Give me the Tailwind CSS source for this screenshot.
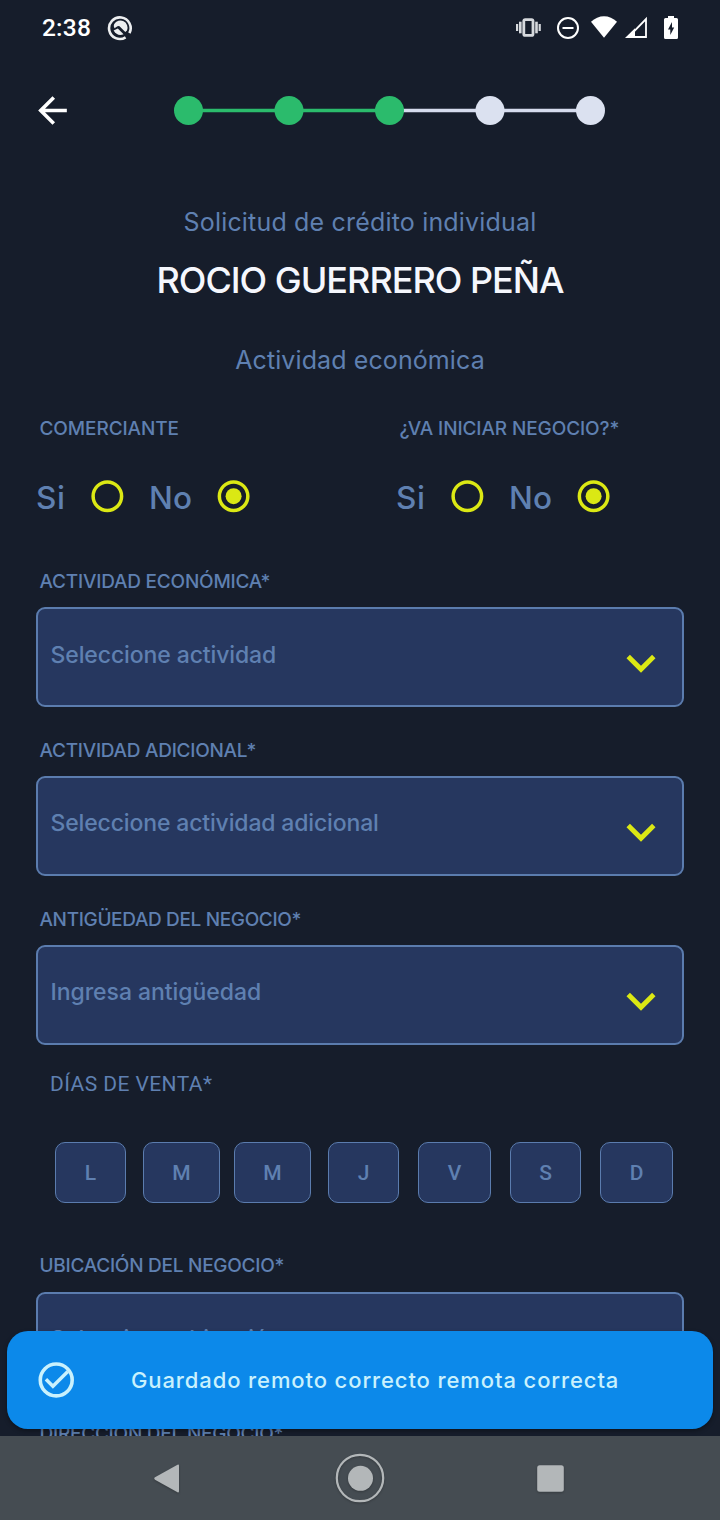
<!DOCTYPE html>
<html lang="es">
<head>
<meta charset="utf-8">
<title>Solicitud de crédito individual</title>
<script src="https://cdn.jsdelivr.net/npm/@tailwindcss/browser@4"></script>
</head>
<body class="bg-[#161d2b]">
<div class="relative flex h-[1520px] w-[720px] flex-col overflow-hidden bg-[#161d2b] font-['Inter',sans-serif] text-[#5f80b1]">

  <!-- Status bar -->
  <div class="flex h-14 shrink-0 items-center justify-between pr-[41px] pl-[42px] text-white">
    <div class="flex items-center gap-[15.500px]">
      <span class="pt-px font-['Roboto',sans-serif] text-[24.5px] leading-none font-medium tracking-[0.2px]">2:38</span>
      <svg class="-mt-px size-[26px]" viewBox="0 0 26 26" fill="none">
        <path d="M18.600 22.300A10.800 10.800 0 1 1 22.400 18.200" stroke="#eceef0" stroke-width="2.600"/>
        <path d="M7.200 9A7.200 7.200 0 0 1 20 15.500L18.300 17 12.500 11.300Q11.500 10.500 10.500 11.300L7.500 13.200Q6 11.500 7.200 9Z" fill="#eceef0"/>
        <path d="M6.600 15.500L10.800 13.600 16.600 19.200Q10.500 21.800 6.600 15.500Z" fill="#eceef0"/>
        <path d="M16.500 17.500L21 21.800" stroke="#161d2b" stroke-width="1.600"/>
      </svg>
    </div>
    <svg class="h-[26px] w-[164px]" viewBox="515 15 164 26" fill="none">
      <g fill="#d6d9dd">
        <rect x="523.800" y="19.600" width="9.200" height="15.800" rx="1.500" stroke="#d6d9dd" stroke-width="2.800" fill="none"/>
        <rect x="516" y="24" width="2.200" height="7"/><rect x="519" y="21.700" width="2.600" height="11.600"/>
        <rect x="535.200" y="21.700" width="2.600" height="11.600"/><rect x="538.600" y="24" width="2.200" height="7"/>
      </g>
      <circle cx="568" cy="28" r="10" stroke="#fff" stroke-width="2"/>
      <path d="M562.500 28h11" stroke="#fff" stroke-width="2"/>
      <path d="M604 37.800L591 21.800C598.500 14.300 609.500 14.300 617 21.800Z" fill="#fff"/>
      <path d="M646 19v18h-17.500z" stroke="#fff" stroke-width="1.800"/>
      <path d="M625 38L635 28.200V38Z" fill="#fff"/>
      <path d="M668 16h6v2h2.500q1.500 0 1.500 1.500v18q0 1.500-1.500 1.500h-11q-1.500 0-1.500-1.500v-18q0-1.500 1.500-1.500H668z" fill="#fff"/>
      <path d="M672 22l-4 7.500h2.300V35l3.900-7.500H672z" fill="#161d2b"/>
    </svg>
  </div>

  <!-- App bar with progress steps -->
  <div class="flex h-[108px] shrink-0 items-center pl-[31px]">
    <svg class="mt-px size-[43px]" viewBox="0 0 24 24" fill="#fff"><path d="M20 11H7.830l5.590-5.590L12 4l-8 8 8 8 1.410-1.410L7.830 13H20v-2z"/></svg>
    <svg class="ml-[100px] h-[29px] w-[431px]" viewBox="0 0 431 29">
      <path d="M14.500 14.400H215" stroke="#2bbb6c" stroke-width="3.500"/>
      <path d="M215.500 14.400H416" stroke="#d5dbed" stroke-width="3.500"/>
      <g fill="#2bbb6c"><circle cx="14.500" cy="14.500" r="14.500"/><circle cx="115" cy="14.500" r="14.500"/><circle cx="215.500" cy="14.500" r="14.500"/></g>
      <g fill="#dbe1f0"><circle cx="316" cy="14.500" r="14.500"/><circle cx="416.500" cy="14.500" r="14.500"/></g>
    </svg>
  </div>

  <!-- Headings -->
  <div class="flex shrink-0 flex-col items-center pt-[42px] whitespace-nowrap">
    <p class="text-[25px] leading-8 font-normal tracking-[0.180px]">Solicitud de crédito individual</p>
    <h1 class="mt-5 text-[36px] leading-[44px] font-medium tracking-[-1px] text-[#f5f7fd]">ROCIO GUERRERO PEÑA</h1>
    <h2 class="mt-[42px] text-[25px] leading-8 font-normal tracking-[0.100px]">Actividad económica</h2>
  </div>

  <!-- Yes / no questions -->
  <div class="mt-[41px] grid shrink-0 grid-cols-2 text-[19px] leading-6 font-medium whitespace-nowrap">
    <div class="pl-9">
      <p class="pl-[3.500px] tracking-[-0.096px]">COMERCIANTE</p>
      <div class="mt-[35px] flex h-10 items-center text-[31.500px]">
        <span class="w-[52px] pt-[4px] tracking-[0.600px]">Si</span>
        <svg class="size-[38.400px]" viewBox="0 0 24 24"><circle cx="12.100" cy="12" r="8.900" fill="none" stroke="#dbe814" stroke-width="2.200"/></svg>
        <span class="w-[88px] pt-[4px] pl-[22.500px] tracking-[0.200px]">No</span>
        <svg class="size-[38.400px]" viewBox="0 0 24 24"><circle cx="12.250" cy="12" r="8.900" fill="none" stroke="#dbe814" stroke-width="2.200"/><circle cx="12.250" cy="12" r="5" fill="#dbe814"/></svg>
      </div>
    </div>
    <div class="pl-9">
      <p class="pl-[3.500px] tracking-[-0.096px]">¿VA INICIAR NEGOCIO?*</p>
      <div class="mt-[35px] flex h-10 items-center text-[31.500px]">
        <span class="w-[52px] pt-[4px] tracking-[0.600px]">Si</span>
        <svg class="size-[38.400px]" viewBox="0 0 24 24"><circle cx="12.100" cy="12" r="8.900" fill="none" stroke="#dbe814" stroke-width="2.200"/></svg>
        <span class="w-[88px] pt-[4px] pl-[22.500px] tracking-[0.200px]">No</span>
        <svg class="size-[38.400px]" viewBox="0 0 24 24"><circle cx="12.250" cy="12" r="8.900" fill="none" stroke="#dbe814" stroke-width="2.200"/><circle cx="12.250" cy="12" r="5" fill="#dbe814"/></svg>
      </div>
    </div>
  </div>

  <!-- Select fields -->
  <div class="mt-[54px] flex shrink-0 flex-col gap-8 px-9 font-medium whitespace-nowrap">
    <div>
      <p class="pl-[3.500px] text-[19px] leading-6 tracking-[-0.210px]">ACTIVIDAD ECONÓMICA*</p>
      <div class="mt-[13px] flex h-[100px] items-start justify-between rounded-[9px] border-2 border-[#5b7cae] bg-[#26375f] pr-3 pl-[12.500px] text-[23px]">
        <span class="pt-8 leading-7 tracking-[-0.110px]">Seleccione actividad</span>
        <svg class="mt-[25px] size-[58px]" viewBox="0 0 24 24" fill="#dbe814"><path d="M7.410 8.590L12 13.170l4.590-4.580L18 10l-6 6-6-6z"/></svg>
      </div>
    </div>
    <div>
      <p class="pl-[3.500px] text-[19px] leading-6 tracking-[-0.267px]">ACTIVIDAD ADICIONAL*</p>
      <div class="mt-[13px] flex h-[100px] items-start justify-between rounded-[9px] border-2 border-[#5b7cae] bg-[#26375f] pr-3 pl-[12.500px] text-[23px]">
        <span class="pt-[31px] leading-7 tracking-[-0.150px]">Seleccione actividad adicional</span>
        <svg class="mt-[25px] size-[58px]" viewBox="0 0 24 24" fill="#dbe814"><path d="M7.410 8.590L12 13.170l4.590-4.580L18 10l-6 6-6-6z"/></svg>
      </div>
    </div>
    <div>
      <p class="pl-[3.500px] text-[19px] leading-6 tracking-[-0.348px]">ANTIGÜEDAD DEL NEGOCIO*</p>
      <div class="mt-[13px] flex h-[100px] items-start justify-between rounded-[9px] border-2 border-[#5b7cae] bg-[#26375f] pr-3 pl-[12.500px] text-[23px]">
        <span class="pt-[31px] leading-7 tracking-[-0.050px]">Ingresa antigüedad</span>
        <svg class="mt-[25px] size-[58px]" viewBox="0 0 24 24" fill="#dbe814"><path d="M7.410 8.590L12 13.170l4.590-4.580L18 10l-6 6-6-6z"/></svg>
      </div>
    </div>
  </div>

  <!-- Sale days -->
  <p class="mt-[27px] shrink-0 pl-[50px] font-['Roboto',sans-serif] text-[21px] leading-6 tracking-[0.430px]">DÍAS DE VENTA*</p>
  <div class="mt-[46px] flex h-[61px] shrink-0 pl-[55px] font-['Roboto',sans-serif] text-[21px] font-medium">
    <button class="mr-[17px] w-[71px] rounded-[10px] border-[1.500px] border-[#5b7cae] bg-[#26375f] pt-[2px]">L</button>
    <button class="mr-[14px] w-[77px] rounded-[10px] border-[1.500px] border-[#5b7cae] bg-[#26375f] pt-[2px]">M</button>
    <button class="mr-[17px] w-[77px] rounded-[10px] border-[1.500px] border-[#5b7cae] bg-[#26375f] pt-[2px]">M</button>
    <button class="mr-[19px] w-[71px] rounded-[10px] border-[1.500px] border-[#5b7cae] bg-[#26375f] pt-[2px]">J</button>
    <button class="mr-[19px] w-[73px] rounded-[10px] border-[1.500px] border-[#5b7cae] bg-[#26375f] pt-[2px]">V</button>
    <button class="mr-[19px] w-[71px] rounded-[10px] border-[1.500px] border-[#5b7cae] bg-[#26375f] pt-[2px]">S</button>
    <button class="w-[73px] rounded-[10px] border-[1.500px] border-[#5b7cae] bg-[#26375f] pt-[2px]">D</button>
  </div>

  <!-- Location fields, partly under the toast -->
  <div class="mt-[51px] flex shrink-0 flex-col gap-[30px] px-9 font-medium whitespace-nowrap">
    <div>
      <p class="pl-[3.500px] text-[19px] leading-6 tracking-[-0.256px]">UBICACIÓN DEL NEGOCIO*</p>
      <div class="mt-3.5 flex h-[100px] items-start rounded-[9px] border-2 border-[#5b7cae] bg-[#26375f] pl-[12.500px] text-[23px]">
        <span class="pt-[31px] leading-7 tracking-[-0.200px]">Seleccione ubicación</span>
      </div>
    </div>
    <p class="pl-[3.500px] text-[19px] leading-6 tracking-[-0.236px]">DIRECCIÓN DEL NEGOCIO*</p>
  </div>

  <!-- Toast -->
  <div class="absolute inset-x-[7px] top-[1331px] flex h-[98px] items-center rounded-[21px] bg-[#0c89ea] pl-[27.500px] text-[#c9f1fd] shadow-[0_2px_4px_rgba(0,0,0,0.350)]">
    <svg class="size-[43px]" viewBox="0 0 24 24" fill="none" stroke="currentColor" stroke-width="2"><circle cx="11.850" cy="11.700" r="8.900"/><path d="M6.100 11.300l3.900 3.900 8.300-8.200" stroke-width="1.900"/></svg>
    <span class="ml-[53.500px] text-[22px] leading-7 font-medium tracking-[0.890px] whitespace-nowrap">Guardado remoto correcto remota correcta</span>
  </div>

  <!-- Android navigation bar -->
  <div class="absolute inset-x-0 bottom-0 h-[84px] bg-[#454c52]">
    <svg class="h-[84px] w-[720px] drop-shadow-[0_1px_1px_rgba(0,0,0,0.250)]" viewBox="0 0 720 84" fill="#b3b7b9">
      <path d="M155 41.300L177.500 28.700Q179 28 179 29.700V55.300Q179 57 177.500 56.200L155 43.700Q153.500 42.500 155 41.300Z"/>
      <circle cx="360" cy="42" r="23.200" fill="none" stroke="#b3b7b9" stroke-width="2.200"/>
      <circle cx="360.500" cy="42.300" r="12.500"/>
      <rect x="537.200" y="29.200" width="26.600" height="26.600" rx="2.500"/>
    </svg>
  </div>
</div>
</body>
</html>
